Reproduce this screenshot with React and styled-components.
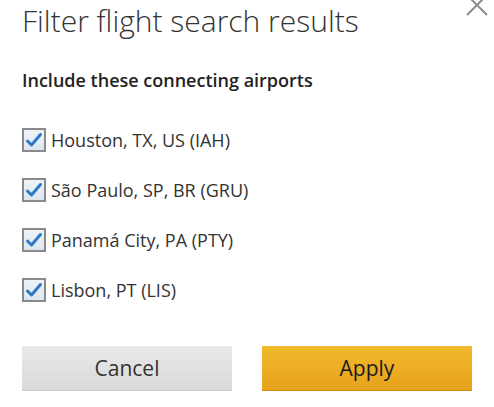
import React, { useState } from "react";
import styled, { createGlobalStyle } from "styled-components";

const GlobalStyle = createGlobalStyle`
    body {
        margin: 0;
        background: #ffffff;
        font-family: "Open Sans", "Liberation Sans", sans-serif;
    }
`;

const Dialog = styled.div`
    position: relative;
    width: 494px;
    height: 407px;
    box-sizing: border-box;
    padding: 2px 22px 0 22px;
    background: #fff;
    overflow: hidden;
`;

const CloseButton = styled.button`
    position: absolute;
    top: -6px;
    right: 6px;
    width: 22px;
    height: 22px;
    padding: 0;
    border: none;
    background: none;
    cursor: pointer;
`;

const Title = styled.h1`
    margin: 0;
    font-weight: 300;
    font-size: 30px;
    line-height: 38px;
    color: #333;
`;

const SubTitle = styled.h2`
    margin: 29px 0 0 0;
    font-weight: 600;
    font-size: 18px;
    line-height: 22px;
    color: #222;
`;

const List = styled.div`
    display: flex;
    flex-direction: column;
    gap: 26px;
    margin-top: 37px;
`;

const Row = styled.label`
    display: flex;
    align-items: center;
    gap: 5px;
    height: 24px;
    cursor: pointer;
`;

const Box = styled.span`
    width: 24px;
    height: 24px;
    box-sizing: border-box;
    border: 2px solid #8a8a8a;
    background: linear-gradient(#eef3f8, #dde6ef);
    display: flex;
    align-items: center;
    justify-content: center;
`;

const Label = styled.span`
    font-size: 18px;
    color: #333;
`;

const Buttons = styled.div`
    display: flex;
    gap: 30px;
    margin-top: 44px;
`;

const Button = styled.button`
    width: 210px;
    height: 45px;
    border: none;
    border-bottom: 1px solid ${(p) => (p.$primary ? "#d08d12" : "#c8c8c8")};
    background: ${(p) =>
        p.$primary
            ? "linear-gradient(#f1b92c, #e7a21c)"
            : "linear-gradient(#e9e9e9, #d9d9d9)"};
    font-family: "Open Sans", "Liberation Sans", sans-serif;
    font-size: 21px;
    color: ${(p) => (p.$primary ? "#1a1a1a" : "#333")};
    cursor: pointer;
`;

const airports = [
    "Houston, TX, US (IAH)",
    "São Paulo, SP, BR (GRU)",
    "Panamá City, PA (PTY)",
    "Lisbon, PT (LIS)",
];

const Check = () => (
    <svg width="18" height="16" viewBox="0 0 18 16">
        <path d="M2.5 9 L6.5 13 L15.5 2.5" fill="none" stroke="#2f78c4" strokeWidth="3" strokeLinecap="round" strokeLinejoin="round" />
    </svg>
);

const App = () => {
    const [checked, setChecked] = useState(airports.map(() => true));
    return (
        <>
            <GlobalStyle />
            <Dialog>
                <CloseButton aria-label="Close">
                    <svg width="22" height="22" viewBox="0 0 22 22">
                        <path d="M1 1 L21 21 M21 1 L1 21" stroke="#8c8c8c" strokeWidth="2" />
                    </svg>
                </CloseButton>
                <Title>Filter flight search results</Title>
                <SubTitle>Include these connecting airports</SubTitle>
                <List>
                    {airports.map((a, i) => (
                        <Row key={a} onClick={() => setChecked(checked.map((c, j) => (j === i ? !c : c)))}>
                            <Box>{checked[i] && <Check />}</Box>
                            <Label>{a}</Label>
                        </Row>
                    ))}
                </List>
                <Buttons>
                    <Button>Cancel</Button>
                    <Button $primary>Apply</Button>
                </Buttons>
            </Dialog>
        </>
    );
};

export default App;
